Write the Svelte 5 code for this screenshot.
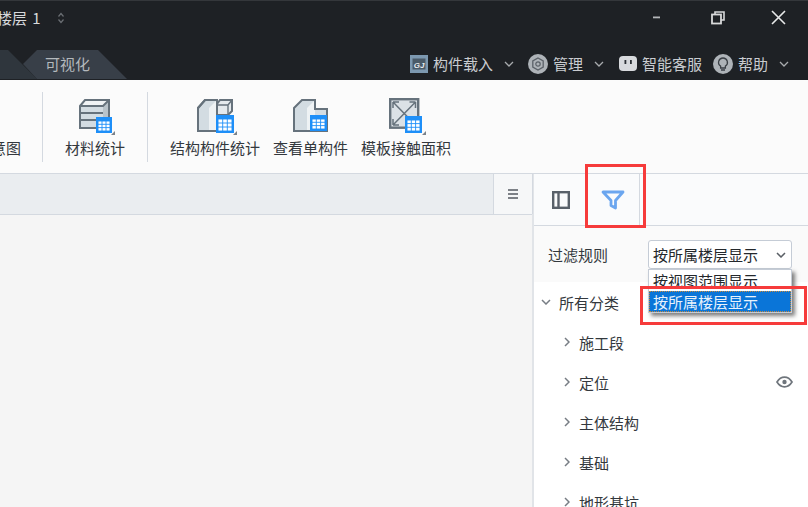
<script>
  const tree = [
    { label: "施工段" },
    { label: "定位", eye: true },
    { label: "主体结构" },
    { label: "基础" },
    { label: "地形基坑" }
  ];
</script>

<div class="app">
  <header class="top">
    <div class="title-row">
      <span class="floor">楼层 1</span>
      <svg class="spin" width="8" height="12" viewBox="0 0 8 12"><path d="M1.500 4.500 4 1.500 6.500 4.500M1.500 7.500 4 10.500 6.500 7.500" fill="none" stroke="#6b6f74" stroke-width="1.200"/></svg>
      <div class="win">
        <svg width="8" height="3" viewBox="0 0 8 3"><rect y="0.500" width="7" height="1.800" fill="#b4b6b9"/></svg>
        <svg width="14" height="14" viewBox="0 0 14 14"><path d="M4 3V1h9v8h-3" fill="none" stroke="#d8d9da" stroke-width="1.600"/><rect x="1" y="3.500" width="9" height="9" fill="none" stroke="#d8d9da" stroke-width="1.800"/></svg>
        <svg width="15" height="15" viewBox="0 0 15 15"><path d="M1 1l13 13M14 1 1 14" stroke="#e8e9ea" stroke-width="1.600"/></svg>
      </div>
    </div>
    <div class="tab-row">
      <svg class="tabs" width="128" height="34" viewBox="0 0 128 34">
        <path d="M0 4H8L37 33H0Z" fill="#2f363d"/>
        <path d="M37 4H98L127 33H37L23 18Z" fill="#383f48"/>
      </svg>
      <span class="tab-label">可视化</span>
      <div class="tools">
        <span class="tool t1">
          <svg width="18" height="18" viewBox="0 0 18 18"><rect width="18" height="18" fill="#7c98b0"/><rect x="2.500" y="3.500" width="13" height="11" fill="#4a5a68"/><text x="9" y="12.500" class="gj">GJ</text></svg>
          构件载入
          <svg class="chev" width="10" height="6" viewBox="0 0 10 6"><path d="M1 1l4 4 4-4" fill="none" stroke="#a8abae" stroke-width="1.300"/></svg>
        </span>
        <span class="tool t2">
          <svg width="20" height="20" viewBox="0 0 20 20"><circle cx="10" cy="10" r="10" fill="#aeb3b8"/><path d="M10 4l5.200 3v6L10 16l-5.200-3V7Z" fill="none" stroke="#5b6168" stroke-width="1.300"/><circle cx="10" cy="10" r="2.200" fill="none" stroke="#5b6168" stroke-width="1.200"/></svg>
          管理
          <svg class="chev" width="10" height="6" viewBox="0 0 10 6"><path d="M1 1l4 4 4-4" fill="none" stroke="#a8abae" stroke-width="1.300"/></svg>
        </span>
        <span class="tool t3">
          <svg width="18" height="16" viewBox="0 0 18 16"><rect width="18" height="15" rx="4" fill="#d8dadd"/><rect x="5.500" y="4" width="1.800" height="4" fill="#2a2e33"/><rect x="11" y="4" width="1.800" height="4" fill="#2a2e33"/></svg>
          智能客服
        </span>
        <span class="tool t4">
          <svg width="20" height="20" viewBox="0 0 20 20"><circle cx="10" cy="10" r="10" fill="#aeb3b8"/><path d="M10 4a4.400 4.400 0 0 0-2.400 8.100V14h4.800v-1.900A4.400 4.400 0 0 0 10 4ZM8 16h4" fill="none" stroke="#3a3f45" stroke-width="1.300"/></svg>
          帮助
          <svg class="chev" width="10" height="6" viewBox="0 0 10 6"><path d="M1 1l4 4 4-4" fill="none" stroke="#a8abae" stroke-width="1.300"/></svg>
        </span>
      </div>
    </div>
  </header>

  <section class="ribbon">
    <div class="rb clip"><span class="rb-label">意图</span></div>
    <div class="sep s1"></div>
    <div class="rb material">
      <svg class="ic" width="40" height="38" viewBox="0 0 40 38">
        <path d="M3 8 8 2H32V30H3Z" fill="#d3dce2"/>
        <path d="M3 8 8 2H32L26 8Z" fill="#f0f3f5"/>
        <path d="M26 8 32 2V30H26Z" fill="#b9c3ca"/>
        <path d="M3 8 8 2H32V30H3ZM3 8H26L32 2M3 15H26M3 22H22" fill="none" stroke="#66727c" stroke-width="2"/>
        <rect x="19" y="19" width="16" height="16" fill="#1e8ff8"/>
        <path d="M21 23H33V33H21ZM25 23V33M29 23V33M21 26.300H33M21 29.600H33" fill="#fff" stroke="#1e8ff8" stroke-width="0.900"/>
        <path d="M38 33v4h-4Z" fill="#7a828a"/>
      </svg>
      <span class="rb-label">材料统计</span>
    </div>
    <div class="sep s2"></div>
    <div class="rb struct">
      <svg class="ic" width="42" height="38" viewBox="0 0 42 38">
        <path d="M2 10 9 2H21V33H2Z" fill="#d3dce2" stroke="#66727c" stroke-width="2"/>
        <path d="M13 10 21 2V33H13Z" fill="#eef2f4"/>
        <path d="M2 10 9 2H21V33H2Z" fill="none" stroke="#66727c" stroke-width="2"/>
        <path d="M21 6 24 2H36V13L32 17H21Z" fill="#e4e9ed" stroke="#66727c" stroke-width="2"/>
        <path d="M21 7H32L36 2M32 7V17" fill="none" stroke="#66727c" stroke-width="1.400"/>
        <rect x="20" y="17" width="18" height="18" fill="#1e8ff8"/>
        <path d="M22 21H36V33H22ZM26.700 21V33M31.300 21V33M22 25H36M22 29H36" fill="#fff" stroke="#1e8ff8" stroke-width="0.900"/>
        <path d="M41 33v4h-4Z" fill="#7a828a"/>
      </svg>
      <span class="rb-label">结构构件统计</span>
    </div>
    <div class="rb single">
      <svg class="ic" width="38" height="38" viewBox="0 0 38 38">
        <path d="M2 10 10 2H23V11H35V33H2Z" fill="#d3dce2"/>
        <path d="M15 10 23 2V33H15Z" fill="#eef2f4"/>
        <path d="M2 10 10 2H23V11H35V33H2Z" fill="none" stroke="#66727c" stroke-width="2"/>
        <rect x="18" y="17" width="17" height="16" fill="#1e8ff8"/>
        <path d="M20 21H33V31H20ZM24.300 21V31M28.600 21V31M20 24.300H33M20 27.600H33" fill="#fff" stroke="#1e8ff8" stroke-width="0.900"/>
      </svg>
      <span class="rb-label">查看单构件</span>
    </div>
    <div class="rb contact">
      <svg class="ic" width="40" height="38" viewBox="0 0 40 38">
        <rect x="3.200" y="1.200" width="28" height="28.500" fill="#dbe1e6" stroke="#66727c" stroke-width="2.400"/>
        <path d="M6 4 28.500 27M28.500 4 6 27M6 4h6M6 4v6M28.500 4h-6M28.500 4v6M6 27h6M6 27v-6" fill="none" stroke="#66727c" stroke-width="1.500"/>
        <rect x="18" y="18" width="17" height="17" fill="#1e8ff8"/>
        <path d="M20 22H33V33H20ZM24.300 22V33M28.600 22V33M20 25.600H33M20 29.300H33" fill="#fff" stroke="#1e8ff8" stroke-width="0.900"/>
        <path d="M39 33v4h-4Z" fill="#7a828a"/>
      </svg>
      <span class="rb-label">模板接触面积</span>
    </div>
  </section>

  <main class="body">
    <div class="canvas">
      <div class="canvas-bar">
        <button class="menu-btn" aria-label="菜单">
          <svg width="10" height="10" viewBox="0 0 10 10"><path d="M0 1h10M0 5h10M0 9h10" stroke="#555b62" stroke-width="1.500"/></svg>
        </button>
      </div>
    </div>
    <aside class="panel">
      <div class="panel-tabs">
        <div class="ptab">
          <svg width="18" height="18" viewBox="0 0 18 18"><rect x="1.200" y="1.200" width="15.600" height="15.600" fill="none" stroke="#59616a" stroke-width="2.400"/><path d="M6.500 1v16" stroke="#59616a" stroke-width="2.400"/></svg>
        </div>
        <div class="ptab active">
          <svg width="24" height="20" viewBox="0 0 24 20"><path d="M2 2H22L14.500 10.500V18L10 15.500V10.500Z" fill="none" stroke="#6ba6ef" stroke-width="2.800" stroke-linejoin="round"/></svg>
        </div>
      </div>
      <div class="rule">
        <span class="rule-label">过滤规则</span>
        <div class="select">
          按所属楼层显示
          <svg width="10" height="6" viewBox="0 0 10 6"><path d="M1 1l4 4 4-4" fill="none" stroke="#5a5f65" stroke-width="1.500"/></svg>
        </div>
      </div>
      <div class="all">
        <svg width="10" height="6" viewBox="0 0 10 6"><path d="M1 1l4 4 4-4" fill="none" stroke="#777d84" stroke-width="1.500"/></svg>
        <span>所有分类</span>
      </div>
      <ul class="tree">
        {#each tree as node}
          <li>
            <svg width="6" height="10" viewBox="0 0 6 10"><path d="M1 1l4 4-4 4" fill="none" stroke="#777d84" stroke-width="1.500"/></svg>
            <span>{node.label}</span>
            {#if node.eye}
              <svg class="eye" width="17" height="12" viewBox="0 0 17 12"><path d="M1 6c2-3.200 4.500-4.800 7.500-4.800S14 2.800 16 6c-2 3.200-4.500 4.800-7.500 4.800S3 9.200 1 6Z" fill="none" stroke="#6f757c" stroke-width="1.700"/><circle cx="8.500" cy="6" r="2.200" fill="#6f757c"/></svg>
            {/if}
          </li>
        {/each}
      </ul>
      <div class="dropdown">
        <div class="opt">按视图范围显示</div>
        <div class="opt sel">按所属楼层显示</div>
      </div>
    </aside>
  </main>

  <div class="mark m1"></div>
  <div class="mark m2"></div>
</div>

<style>
  :global(body) {
    margin: 0;
    background: #f5f5f5;
  }

  .app {
    position: relative;
    width: 808px;
    height: 507px;
    overflow: hidden;
    display: flex;
    flex-direction: column;
    font-family: "Noto Sans CJK SC", "Liberation Sans", sans-serif;
    font-size: 15px;
    color: #33383d;
  }

  .top {
    height: 80px;
    flex: none;
    background: #1e2125;
    border-top: 1px solid #34373b;
    box-sizing: border-box;
    display: flex;
    flex-direction: column;
  }

  .title-row {
    height: 33px;
    display: flex;
    align-items: center;
    color: #d8dadc;
  }

  .floor {
    margin-left: -3px;
    width: 58px;
    line-height: 1;
    white-space: nowrap;
    word-spacing: 2px;
  }

  .spin {
    margin-left: 2px;
  }

  .win {
    margin-left: auto;
    display: flex;
    align-items: center;
    padding-right: 22px;
    gap: 46px;
  }

  .win svg:first-child {
    margin-right: 4px;
  }

  .tab-row {
    position: relative;
    flex: 1;
    margin-top: 12px;
  }

  .tabs {
    position: absolute;
    left: 0;
    bottom: 0;
  }

  .tab-label {
    position: absolute;
    left: 45px;
    top: 10px;
    line-height: 16px;
    color: #b4b9bd;
  }

  .tools {
    position: absolute;
    left: 410px;
    top: 8px;
    height: 20px;
    display: flex;
    align-items: center;
    color: #c9ccd0;
  }

  .tool {
    display: flex;
    align-items: center;
    white-space: nowrap;
    line-height: 20px;
  }

  .tool > svg:first-child {
    margin-right: 5px;
  }

  .gj {
    font: italic bold 8px "Liberation Sans", sans-serif;
    fill: #e8edf0;
    text-anchor: middle;
  }

  .chev {
    margin-left: 11px;
  }

  .t1 { width: 118px; }
  .t2 { width: 91px; }
  .t3 { width: 94px; }

  .ribbon {
    height: 94px;
    flex: none;
    background: #fbfbfb;
    border-bottom: 1px solid #d4d9e0;
    box-sizing: border-box;
    display: flex;
  }

  .rb {
    display: flex;
    flex-direction: column;
    align-items: flex-start;
    flex: none;
    padding-top: 18px;
    white-space: nowrap;
  }

  .ic {
    display: block;
    margin-bottom: 3px;
    flex: none;
  }

  .rb-label {
    line-height: 18px;
  }

  .clip {
    width: 21px;
    padding-top: 59px;
    overflow: hidden;
    align-items: flex-end;
  }

  .sep {
    width: 1px;
    height: 70px;
    margin-top: 12px;
    background: #d4d9e0;
    flex: none;
  }

  .s1 { margin-left: 21px; }

  .material {
    width: 104px;
    align-items: center;
  }

  .material .ic { margin-left: 3px; }
  .struct { width: 90px; margin-left: 22px; }
  .struct .ic { margin-left: 26px; }
  .single { width: 75px; margin-left: 13px; }
  .single .ic { margin-left: 19px; }
  .contact { width: 90px; margin-left: 13px; }
  .contact .ic { margin-left: 26px; }

  .body {
    flex: 1;
    display: flex;
    min-height: 0;
  }

  .canvas {
    width: 532px;
    flex: none;
    background: #f5f5f5;
    border-right: 2px solid #e1e4e8;
  }

  .canvas-bar {
    height: 41px;
    background: #eaedf0;
    border-bottom: 1px solid #d4d9e0;
    box-sizing: border-box;
    display: flex;
    justify-content: flex-end;
  }

  .menu-btn {
    width: 40px;
    height: 40px;
    margin-right: -1px;
    background: #f6f7f8;
    border: 1px solid #d4d9e0;
    border-width: 0 1px;
    padding: 0;
    display: flex;
    align-items: center;
    justify-content: center;
  }

  .panel {
    position: relative;
    flex: 1;
    background: #fff;
  }

  .panel-tabs {
    height: 52px;
    background: #fafbfc;
    border-bottom: 1px solid #d4d9e0;
    box-sizing: border-box;
    display: flex;
  }

  .ptab {
    width: 53px;
    display: flex;
    align-items: center;
    justify-content: center;
  }

  .ptab.active {
    width: 52px;
    border-right: 1px solid #d4d9e0;
  }

  .rule {
    height: 56px;
    background: #fafafa;
    display: flex;
    align-items: center;
    padding: 1px 0 0 14px;
    box-sizing: border-box;
  }

  .rule-label {
    width: 100px;
    flex: none;
  }

  .select {
    width: 144px;
    height: 29px;
    box-sizing: border-box;
    background: #fff;
    border: 1px solid #c5ccd6;
    border-radius: 3px;
    padding: 0 5px 0 4px;
    display: flex;
    align-items: center;
    justify-content: space-between;
    white-space: nowrap;
    color: #24282c;
  }

  .all {
    display: flex;
    align-items: center;
    height: 40px;
    padding-left: 7px;
    gap: 8px;
  }

  .tree {
    list-style: none;
    margin: 0;
    padding: 0;
  }

  .tree li {
    height: 40px;
    display: flex;
    align-items: center;
    padding: 0 15px 0 30px;
    gap: 9px;
    line-height: 1;
  }

  .eye {
    margin-left: auto;
  }

  .dropdown {
    position: absolute;
    left: 114px;
    top: 95px;
    width: 144px;
    box-sizing: border-box;
    background: #fff;
    border: 1px solid #c5ccd6;
    box-shadow: 3px 3px 4px rgba(0, 0, 0, 0.5);
    color: #24282c;
  }

  .opt {
    height: 21px;
    line-height: 21px;
    padding-left: 4px;
    white-space: nowrap;
  }

  .opt.sel {
    background: #0a75d8;
    color: #e8f2fc;
    outline: 1px dotted #c98a3c;
    outline-offset: -1px;
  }

  .mark {
    position: absolute;
    border: 3px solid #f63b3b;
    box-sizing: border-box;
    pointer-events: none;
  }

  .m1 {
    left: 585px;
    top: 164px;
    width: 61px;
    height: 64px;
  }

  .m2 {
    left: 640px;
    top: 286px;
    width: 167px;
    height: 39px;
  }
</style>
